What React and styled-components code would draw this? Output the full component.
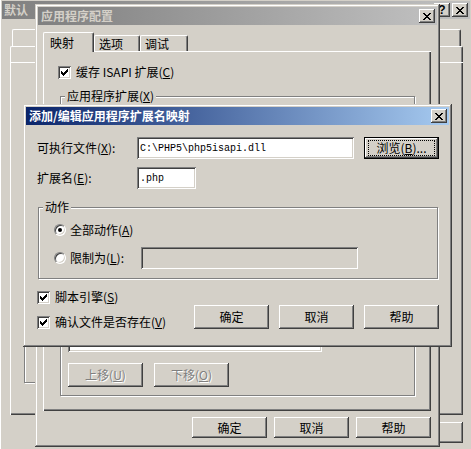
import React from 'react'
import styled, { createGlobalStyle, css } from 'styled-components'

const GlobalStyle = createGlobalStyle`
  html, body {
    margin: 0;
    padding: 0;
    background: #d4d0c8;
  }
  body {
    font-family: "Noto Sans CJK SC", "Liberation Sans", sans-serif;
    font-size: 12px;
    color: #000;
  }
  * {
    box-sizing: border-box;
  }
`

const raised = css`
  box-shadow: inset -1px -1px #404040, inset 1px 1px #fff, inset -2px -2px #808080,
    inset 2px 2px #d4d0c8;
`

const sunken = css`
  box-shadow: inset 1px 1px #808080, inset -1px -1px #fff, inset 2px 2px #404040,
    inset -2px -2px #d4d0c8;
`

const Desktop = styled.div`
  position: relative;
  width: 471px;
  height: 449px;
  overflow: hidden;
  background: #d4d0c8;
`

// windows sit on a free desktop, so their place is their content
const Window = styled.div`
  position: absolute;
  left: ${({ $x }) => $x}px;
  top: ${({ $y }) => $y}px;
  width: ${({ $w }) => $w}px;
  height: ${({ $h }) => $h}px;
  display: flex;
  flex-direction: column;
  padding: 3px;
  background: #d4d0c8;
  box-shadow: inset -1px -1px #404040, inset 1px 1px #d4d0c8, inset -2px -2px #808080,
    inset 2px 2px #fff;
`

const TitleBar = styled.div`
  flex: none;
  height: 18px;
  display: flex;
  align-items: center;
  gap: 2px;
  padding: 0 2px 0 ${({ $padLeft }) => $padLeft ?? 3}px;
  background: linear-gradient(
    to right,
    ${({ $active }) => ($active ? '#0a246a, #a6caf0' : '#808080, #c0c0c0')}
  );
  color: ${({ $active }) => ($active ? '#fff' : '#d4d0c8')};
  font-weight: bold;
  line-height: 18px;
  white-space: nowrap;
`

const Caption = styled.span`
  flex: 1;
  overflow: hidden;
`

const CapButton = styled.div`
  flex: none;
  width: 16px;
  height: 14px;
  display: flex;
  align-items: center;
  justify-content: center;
  background: #d4d0c8;
  color: #000;
  font-family: "Liberation Sans", sans-serif;
  font-size: 12px;
  font-weight: bold;
  ${raised};
`

const Pixels = ({ rows }) => (
  <svg width={rows[0].length} height={rows.length} shapeRendering="crispEdges">
    {rows.flatMap((row, y) =>
      [...row].map((c, x) =>
        c === 'x' ? <rect key={`${x}-${y}`} x={x} y={y} width="1" height="1" fill="#000" /> : null
      )
    )}
  </svg>
)

const closeGlyph = ['xx....xx', '.xx..xx.', '..xxxx..', '...xx...', '..xxxx..', '.xx..xx.', 'xx....xx']
const checkGlyph = ['......x', '.....xx', 'x...xxx', 'xx.xxx.', 'xxxxx..', '.xxx...', '..x....']

const Body = styled.div`
  flex: 1;
  display: flex;
  flex-direction: column;
  padding: ${({ $pad }) => $pad};
`

/* tabs */
const TabRow = styled.div`
  display: flex;
  align-items: flex-end;
  height: ${({ $h }) => $h}px;
  margin: 0 ${({ $inset }) => $inset || 0}px;
`

const Tab = styled.div`
  position: relative;
  flex: ${({ $w }) => ($w ? 'none' : '1')};
  width: ${({ $w }) => ($w ? `${$w}px` : 'auto')};
  height: ${({ $active, $h }) => $h || ($active ? 20 : 16)}px;
  margin-bottom: ${({ $active }) => ($active ? -1 : 0)}px;
  z-index: ${({ $active }) => ($active ? 1 : 0)};
  padding: ${({ $active }) => ($active ? '3px 0 0 6px' : '1px 0 0 4px')};
  background: #d4d0c8;
  border-top: 1px solid #fff;
  border-left: 1px solid #fff;
  border-right: 1px solid #404040;
  border-radius: 2px 2px 0 0;
  box-shadow: inset -1px 0 #808080;
  line-height: 14px;
  text-align: ${({ $w }) => ($w ? 'left' : 'center')};
  white-space: nowrap;
  overflow: hidden;
`

const TabPanel = styled.div`
  position: relative;
  flex: none;
  height: ${({ $h }) => $h}px;
  display: flex;
  flex-direction: column;
  padding: ${({ $pad }) => $pad || '0'};
  box-shadow: inset 1px 1px #fff, inset -1px -1px #404040, inset -2px -2px #808080;
`

/* controls */
const Button = styled.div`
  flex: none;
  width: ${({ $w }) => $w || 75}px;
  height: ${({ $h }) => $h || 24}px;
  display: flex;
  align-items: center;
  justify-content: center;
  background: #d4d0c8;
  color: ${({ $disabled }) => ($disabled ? '#808080' : '#000')};
  text-shadow: ${({ $disabled }) => ($disabled ? '1px 1px #fff' : 'none')};
  line-height: 14px;
  white-space: nowrap;
  ${raised};

  ${({ $default }) =>
    $default &&
    css`
      border: 1px solid #000;
    `}
`

const Focus = styled.span`
  display: flex;
  align-items: center;
  justify-content: center;
  width: 65px;
  height: 14px;
  outline: 1px dotted #000;
`

const Field = styled.div`
  flex: none;
  width: ${({ $w }) => $w}px;
  height: ${({ $h }) => $h || 22}px;
  display: flex;
  align-items: center;
  padding: 0 3px;
  background: ${({ $disabled }) => ($disabled ? '#d4d0c8' : '#fff')};
  font-family: "Liberation Mono", monospace;
  font-size: 10px;
  ${sunken};
`

const ListBox = styled.div`
  flex: none;
  width: 254px;
  height: 242px;
  background: #fff;
  ${sunken};
`

const FormRow = styled.div`
  display: flex;
  align-items: center;
  margin-top: ${({ $mt }) => $mt || 0}px;
`

const Label = styled.span`
  flex: none;
  width: ${({ $w }) => ($w ? `${$w}px` : 'auto')};
  line-height: 14px;
  white-space: nowrap;
`

const CheckRow = styled.div`
  display: flex;
  align-items: center;
  gap: 5px;
  height: 14px;
  margin-top: ${({ $mt }) => $mt || 0}px;
  line-height: 14px;
  white-space: nowrap;
`

const CheckBox = styled.span`
  flex: none;
  width: 13px;
  height: 13px;
  display: flex;
  align-items: center;
  justify-content: center;
  background: #fff;
  ${sunken};
`

const RadioRow = styled.div`
  display: flex;
  align-items: center;
  gap: 4px;
  height: ${({ $h }) => $h || 14}px;
  margin-top: ${({ $mt }) => $mt || 0}px;
  white-space: nowrap;
`

const Radio = styled.span`
  flex: none;
  width: 12px;
  height: 12px;
  display: flex;
  align-items: center;
  justify-content: center;
  border-radius: 50%;
  background: #fff;
  border: 1px solid;
  border-color: #808080 #fff #fff #808080;
  box-shadow: inset 1px 1px #404040, inset -1px -1px #d4d0c8;

  &::after {
    content: '';
    display: ${({ $on }) => ($on ? 'block' : 'none')};
    width: 4px;
    height: 4px;
    border-radius: 50%;
    background: #000;
  }
`

const Group = styled.fieldset`
  margin: ${({ $m }) => $m || 0};
  padding: 0;
  min-width: 0;
  border: 1px solid #808080;
  box-shadow: inset 1px 1px #fff, 1px 1px #fff;
`

const Legend = styled.legend`
  margin-left: 4px;
  padding: 0 2px;
  line-height: 14px;
  background: #d4d0c8;
`

const GroupBody = styled.div`
  display: flex;
  flex-direction: column;
  padding: ${({ $pad }) => $pad};
`

const EtchedBox = styled.div`
  width: 300px;
  height: 83px;
  margin: 238px 0 0 14px;
  padding: 10px 0 0 7px;
  border: 1px solid #808080;
  box-shadow: inset 1px 1px #fff, 1px 1px #fff;
`

const ButtonRow = styled.div`
  display: flex;
  justify-content: ${({ $justify }) => $justify || 'flex-end'};
  gap: ${({ $gap }) => $gap}px;
  margin-top: ${({ $mt }) => $mt || 0}px;
`

const ButtonStack = styled.div`
  display: flex;
  flex-direction: column;
  justify-content: flex-end;
  gap: 6px;
  margin-left: 9px;
`

const BottomArea = styled.div`
  display: flex;
  justify-content: space-between;
  align-items: flex-end;
  margin-top: 11px;
`

const Stack = styled.div`
  display: flex;
  flex-direction: column;
`

const Key = styled.u`
  text-decoration: underline;
`

const Check = ({ children, mt }) => (
  <CheckRow $mt={mt}>
    <CheckBox>
      <Pixels rows={checkGlyph} />
    </CheckBox>
    <span>{children}</span>
  </CheckRow>
)

const backTabsTop = ['性能', 'ISAPI 筛选器', 'Web 站点', '目录安全性', '主目录']
const backTabsBottom = ['文档', 'HTTP 头', '自定义错误', '服务器扩展', '操作员']

const BackWindow = () => (
  <Window $x={-1} $y={-2} $w={474} $h={470}>
    <TitleBar $padLeft={2}>
      <Caption>默认{'\u2003'}Web 站点 属性</Caption>
      <CapButton>?</CapButton>
      <CapButton>
        <Pixels rows={closeGlyph} />
      </CapButton>
    </TitleBar>
    <Body $pad="10px 7px 0 8px">
      <TabRow $h={17} $inset={2}>
        {backTabsTop.map(name => (
          <Tab key={name} $h={17}>
            {name}
          </Tab>
        ))}
      </TabRow>
      <TabRow $h={16}>
        {backTabsBottom.map(name => (
          <Tab key={name} $h={16}>
            {name}
          </Tab>
        ))}
      </TabRow>
      <TabPanel $h={353}>
        <EtchedBox>I</EtchedBox>
      </TabPanel>
      <ButtonRow $gap={7} $mt={7}>
        <Button $h={21}>确定</Button>
        <Button $h={21}>取消</Button>
        <Button $h={21}>应用(A)</Button>
        <Button $h={21}>帮助</Button>
      </ButtonRow>
    </Body>
  </Window>
)

const AppConfigWindow = () => (
  <Window $x={35} $y={4} $w={405} $h={443}>
    <TitleBar>
      <Caption>应用程序配置</Caption>
      <CapButton>
        <Pixels rows={closeGlyph} />
      </CapButton>
    </TitleBar>
    <Body $pad="7px 6px 0 5px">
      <TabRow $h={19}>
        <Tab $w={51} $active>
          映射
        </Tab>
        <Tab $w={46}>选项</Tab>
        <Tab $w={48}>调试</Tab>
      </TabRow>
      <TabPanel $h={360} $pad="14px 15px 0 15px">
        <Check>
          缓存 ISAPI 扩展(<Key>C</Key>)
        </Check>
        <Group $m="10px 1px 0 2px">
          <Legend>
            应用程序扩展(<Key>X</Key>)
          </Legend>
          <GroupBody $pad="7px 8px 8px 7px">
            <FormRow>
              <ListBox />
              <ButtonStack>
                <Button>添加(D)...</Button>
                <Button>编辑(E)...</Button>
                <Button>删除(M)</Button>
              </ButtonStack>
            </FormRow>
            <ButtonRow $justify="flex-start" $gap={11} $mt={11}>
              <Button $disabled>
                上移(<Key>U</Key>)
              </Button>
              <Button $disabled>
                下移(<Key>O</Key>)
              </Button>
            </ButtonRow>
          </GroupBody>
        </Group>
      </TabPanel>
      <ButtonRow $gap={7} $mt={6}>
        <Button $h={21}>确定</Button>
        <Button $h={21}>取消</Button>
        <Button $h={21}>帮助</Button>
      </ButtonRow>
    </Body>
  </Window>
)

const MappingDialog = () => (
  <Window $x={23} $y={104} $w={429} $h={243}>
    <TitleBar $active>
      <Caption>添加/编辑应用程序扩展名映射</Caption>
      <CapButton>
        <Pixels rows={closeGlyph} />
      </CapButton>
    </TitleBar>
    <Body $pad="12px 10px 0 11px">
      <FormRow>
        <Label $w={100}>
          可执行文件(<Key>X</Key>):
        </Label>
        <Field $w={217}>C:\PHP5\php5isapi.dll</Field>
        <Button $default $w={75} $h={22} style={{ marginLeft: 10 }}>
          <Focus>
            浏览(<Key>B</Key>)...
          </Focus>
        </Button>
      </FormRow>
      <FormRow $mt={8}>
        <Label $w={100}>
          扩展名(<Key>E</Key>):
        </Label>
        <Field $w={59}>.php</Field>
      </FormRow>
      <Group $m="11px 1px 0 1px">
        <Legend>动作</Legend>
        <GroupBody $pad="9px 0 9px 15px">
          <RadioRow>
            <Radio $on />
            <Label>
              全部动作(<Key>A</Key>)
            </Label>
          </RadioRow>
          <RadioRow $h={22} $mt={10}>
            <Radio />
            <Label $w={67}>
              限制为(<Key>L</Key>):
            </Label>
            <Field $w={217} $disabled />
          </RadioRow>
        </GroupBody>
      </Group>
      <BottomArea>
        <Stack>
          <Check>
            脚本引擎(<Key>S</Key>)
          </Check>
          <Check mt={11}>
            确认文件是否存在(<Key>V</Key>)
          </Check>
        </Stack>
        <ButtonRow $gap={10}>
          <Button>确定</Button>
          <Button>取消</Button>
          <Button>帮助</Button>
        </ButtonRow>
      </BottomArea>
    </Body>
  </Window>
)

const App = () => (
  <>
    <GlobalStyle />
    <Desktop>
      <BackWindow />
      <AppConfigWindow />
      <MappingDialog />
    </Desktop>
  </>
)

export default App
